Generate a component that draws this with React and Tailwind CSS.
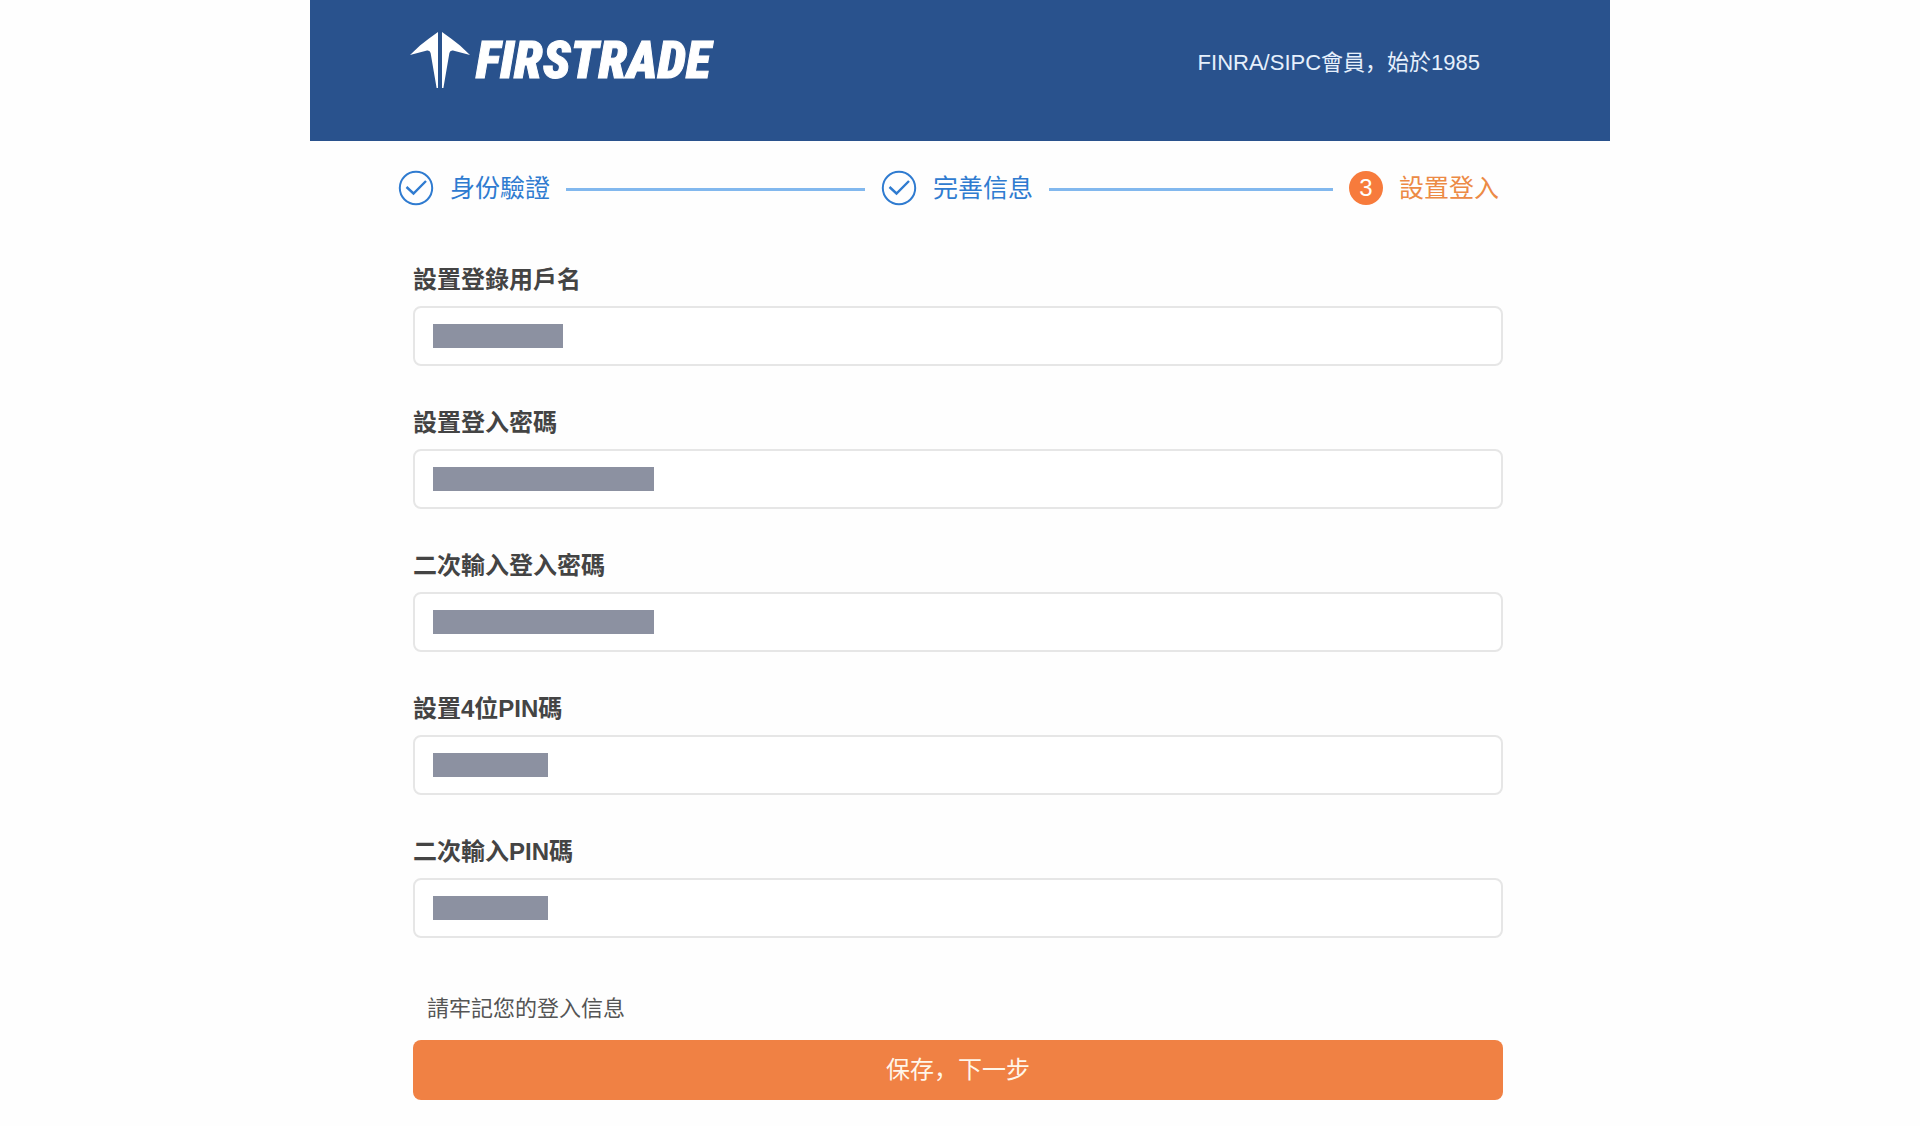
const fields = [
  { id: "username", label: "設置登錄用戶名", type: "text", mask: "w-[130px]" },
  { id: "password", label: "設置登入密碼", type: "password", mask: "w-[221px]" },
  { id: "password-repeat", label: "二次輸入登入密碼", type: "password", mask: "w-[221px]" },
  { id: "pin", label: "設置4位PIN碼", type: "password", mask: "w-[115px]" },
  { id: "pin-repeat", label: "二次輸入PIN碼", type: "password", mask: "w-[115px]" },
];

function Logo() {
  return (
    <a href="#" aria-label="Firstrade" className="flex items-center gap-1.5 text-white">
      <svg viewBox="0 0 60 58" className="h-[58px] w-[60px]" fill="currentColor" aria-hidden="true">
        <path d="M28 0 L28 56 L26.6 56 L20.6 21 Q20 18 17 18.5 L0 23 L10 13.5 Q18 7 28 0Z" />
        <path d="M32 0 L32 56 L33.4 56 L39.4 21 Q40 18 43 18.5 L60 23 L50 13.5 Q42 7 32 0Z" />
      </svg>
      <span className="font-['Roboto_Condensed',sans-serif] text-[52px] leading-[58px] font-black italic [-webkit-text-stroke:1px_currentColor]">
        FIRSTRADE
      </span>
    </a>
  );
}

function DoneStep({ children }) {
  return (
    <li className="flex shrink-0 items-center gap-4 text-[#2f7bd0]">
      <svg viewBox="0 0 36 36" className="size-9" fill="none" stroke="currentColor" aria-hidden="true">
        <circle cx="18" cy="18" r="16.2" strokeWidth="2" />
        <path d="M8.5 17 L15.5 23.5 L28 11" strokeWidth="2.4" />
      </svg>
      <span>{children}</span>
    </li>
  );
}

export default function App() {
  return (
    <div className="min-h-screen bg-[#fefefe] pb-6 font-['Liberation_Sans','Noto_Sans_CJK_SC',sans-serif]">
      <div className="mx-auto max-w-[1300px]">
        <header className="flex h-[141px] items-start justify-between bg-[#29528d] pt-8 pr-[130px] pl-[100px]">
          <Logo />
          <p className="pt-[13px] text-[22px] leading-9 text-[#e6f0fc]">FINRA/SIPC會員，始於1985</p>
        </header>

        <main className="pr-[107px] pl-[103px]">
          <ol className="mr-1 -ml-[15px] flex items-center gap-4 pt-6 text-[25px] leading-[46px]">
            <DoneStep>身份驗證</DoneStep>
            <li aria-hidden="true" className="mt-0.5 h-[3px] grow-[20] bg-[#82b8ee]" />
            <DoneStep>完善信息</DoneStep>
            <li aria-hidden="true" className="mt-0.5 h-[3px] grow-[19] bg-[#82b8ee]" />
            <li aria-current="step" className="flex shrink-0 items-center gap-4 text-[#ec8a45]">
              <span className="flex size-[34px] items-center justify-center rounded-full bg-[#f77b3c] text-2xl text-white">3</span>
              <span>設置登入</span>
            </li>
          </ol>

          <form className="pt-[51px]" onSubmit={(e) => e.preventDefault()}>
            <div className="flex flex-col gap-[39px]">
              {fields.map((f) => (
                <div key={f.id} className="flex flex-col gap-2">
                  <label htmlFor={f.id} className="text-2xl leading-9 font-bold text-[#444]">
                    {f.label}
                  </label>
                  <div className="flex h-[60px] items-center rounded-lg border-2 border-[#e6e6e6] bg-white px-[18px]">
                    <span className={`h-6 shrink-0 bg-[#8c91a1] ${f.mask}`} />
                    <input id={f.id} type={f.type} className="h-full min-w-0 flex-1 text-2xl outline-none" />
                  </div>
                </div>
              ))}
            </div>
            <p className="px-3.5 pt-[51px] text-[22px] leading-10 text-[#555]">請牢記您的登入信息</p>
            <button type="submit" className="mt-[11px] h-[60px] w-full rounded-lg bg-[#f08144] text-2xl text-[#fff6ea]">
              保存，下一步
            </button>
          </form>
        </main>
      </div>
    </div>
  );
}
